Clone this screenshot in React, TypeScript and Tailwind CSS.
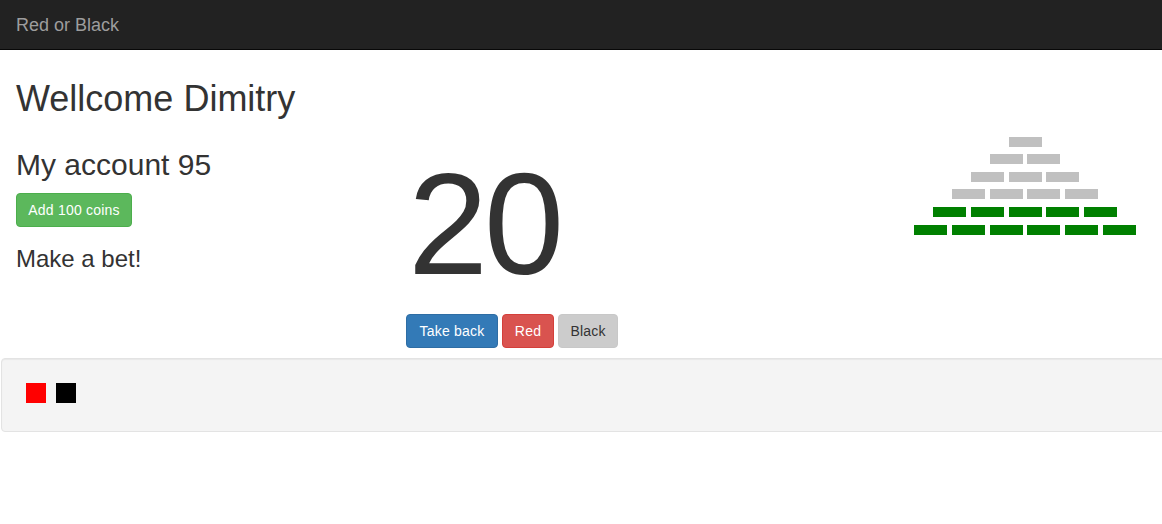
import React from 'react';

const pyramid: string[][] = [
  ['gray'],
  ['gray', 'gray'],
  ['gray', 'gray', 'gray'],
  ['gray', 'gray', 'gray', 'gray'],
  ['green', 'green', 'green', 'green', 'green'],
  ['green', 'green', 'green', 'green', 'green', 'green'],
];

const Pyramid: React.FC = () => (
  <div className="flex flex-col items-center gap-y-[7.6px] w-[222px] mt-[8px]">
    {pyramid.map((row, i) => (
      <div key={i} className="flex gap-x-[4.8px]">
        {row.map((c, j) => (
          <div
            key={j}
            className={c === 'green' ? 'w-[33px] h-[10px] bg-[#008000]' : 'w-[33px] h-[10px] bg-[#c0c0c0]'}
          />
        ))}
      </div>
    ))}
  </div>
);

const btn = 'inline-block h-[34px] rounded-[4px] border text-[14px] leading-[20px] text-center tracking-[0.2px]';

const App: React.FC = () => {
  return (
    <div className="min-h-screen bg-white text-[#333] overflow-hidden" style={{ fontFamily: '"Liberation Sans", Arial, sans-serif' }}>
      <nav className="h-[50px] bg-[#222] border-b border-[#080808] pl-[16px] pt-[15px]">
        <span className="block text-[18px] leading-[20px] text-[#9d9d9d]">Red or Black</span>
      </nav>

      <div className="px-[16px]">
        <h1 className="text-[36px] leading-[39.6px] mt-[29px] mb-[10px]">Wellcome Dimitry</h1>

        <div className="flex items-start">
          <div className="w-[390px]">
            <h2 className="text-[30px] leading-[33px] mt-[19px]">My account 95</h2>
            <button className={`${btn} w-[116px] mt-[12px] bg-[#5cb85c] border-[#4cae4c] text-white`}>Add 100 coins</button>
            <h3 className="text-[24px] leading-[26.4px] mt-[19px]">Make a bet!</h3>
          </div>

          <div className="flex-1 pt-[24px]">
            <div className="text-[144px] leading-[144px] h-[144px] pl-[2px] tracking-[-4px]">20</div>
            <div className="flex gap-[4px] mt-[17px]">
              <button className={`${btn} w-[92px] bg-[#337ab7] border-[#2e6da4] text-white`}>Take back</button>
              <button className={`${btn} w-[52px] bg-[#d9534f] border-[#d43f3a] text-white`}>Red</button>
              <button className={`${btn} w-[60px] bg-[#cccccc] border-[#c8c8c8] text-[#333]`}>Black</button>
            </div>
          </div>

          <div className="mr-[10px]">
            <Pyramid />
          </div>
        </div>
      </div>

      <div className="ml-[1px] mt-[10px] w-[1180px] h-[74px] bg-[#f4f4f4] border border-[#e3e3e3] rounded-[4px] shadow-[inset_0_1px_1px_rgba(0,0,0,0.05)] pl-[24px] pt-[24px] flex gap-[10px]">
        <div className="w-[20px] h-[20px] bg-[#ff0000]" />
        <div className="w-[20px] h-[20px] bg-black" />
      </div>
    </div>
  );
};

export default App;
